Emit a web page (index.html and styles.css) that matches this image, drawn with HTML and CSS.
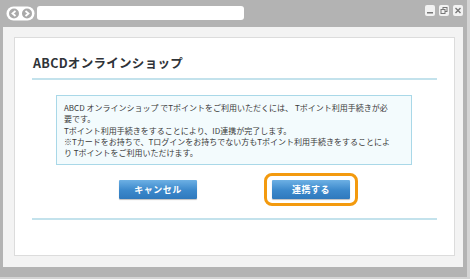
FILE: index.html
```html
<!DOCTYPE html>
<html lang="ja">
<head>
    <meta charset="UTF-8">
    <title>ABCDオンラインショップ</title>
    <link rel="stylesheet" href="styles.css">
</head>
<body>
    <div class="window">
        <div class="titlebar">
            <svg class="nav" width="29" height="15" viewBox="0 0 29 15">
                <rect x="0.5" y="0.5" width="28" height="14" rx="7" fill="#fff"/>
                <circle cx="8" cy="7.5" r="5" fill="#a9a9a9"/>
                <circle cx="21" cy="7.5" r="5" fill="#a9a9a9"/>
                <path d="M9.5 5 L6.5 7.5 L9.5 10" fill="none" stroke="#fff" stroke-width="1.8"/>
                <path d="M19.5 5 L22.5 7.5 L19.5 10" fill="none" stroke="#fff" stroke-width="1.8"/>
            </svg>
            <div class="address"></div>
            <div class="controls">
                <span class="ctl">
                    <svg width="10" height="11" viewBox="0 0 10 11"><rect x="2" y="7" width="6" height="1.5" fill="#777"/></svg>
                </span>
                <span class="ctl">
                    <svg width="10" height="11" viewBox="0 0 10 11"><rect x="4" y="2.5" width="4" height="4" fill="none" stroke="#777"/><rect x="2" y="4.5" width="4" height="4" fill="#f2f2f2" stroke="#777"/></svg>
                </span>
                <span class="ctl">
                    <svg width="10" height="11" viewBox="0 0 10 11"><path d="M2.5 3 L7.5 8 M7.5 3 L2.5 8" stroke="#777" stroke-width="1.4"/></svg>
                </span>
            </div>
        </div>

        <div class="frame">
            <div class="panel">
                <h1 class="shop-title">ABCDオンラインショップ</h1>

                <div class="notice">
                    ABCD オンラインショップ でTポイントをご利用いただくには、 Tポイント利用手続きが必<br>
                    要です。<br>
                    Tポイント利用手続きをすることにより、ID連携が完了します。<br>
                    ※Tカードをお持ちで、Tログインをお持ちでない方もTポイント利用手続きをすることによ<br>
                    り Tポイントをご利用いただけます。
                </div>

                <div class="actions">
                    <button class="btn">キャンセル</button>
                    <span class="focus-ring"><button class="btn">連携する</button></span>
                </div>
            </div>
        </div>
    </div>
</body>
</html>
```

FILE: styles.css
```css
body {
    margin: 0;
    background: #d4d4d4;
    font-family: "Noto Sans CJK JP", "Liberation Sans", sans-serif;
    color: #333;
}
.window {
    width: 467px;
    height: 277px;
    background: #b3b3b3;
    box-sizing: border-box;
    padding: 0 4px 10px 3px;
    display: flex;
    flex-direction: column;
}
.titlebar {
    height: 27px;
    display: flex;
    align-items: flex-start;
    padding-top: 6px;
    box-sizing: border-box;
}
.nav {
    margin-left: 3px;
}
.address {
    width: 207px;
    height: 14px;
    margin-left: 2px;
    background: #fff;
    border-radius: 3px;
}
.controls {
    margin-left: auto;
    margin-top: -1px;
    display: flex;
    gap: 4px;
}
.ctl {
    width: 10px;
    height: 11px;
    background: #f2f2f2;
    border-radius: 2px;
    display: block;
}
.ctl svg {
    display: block;
}
.frame {
    flex: 1;
    background: #f3f3f3;
    padding: 10px 8px 11px 11px;
}
.panel {
    height: 100%;
    box-sizing: border-box;
    background: #fff;
    border: 1px solid #dcdcdc;
    margin: 0;
    padding: 0 17px;
}
.shop-title {
    margin: 15px 0 0;
    padding: 0 0 0 1px;
    height: 25px;
    line-height: 20px;
    font-size: 12.5px;
    font-weight: bold;
    letter-spacing: 0.3px;
    color: #2f3338;
    border-bottom: 2px solid #c3e2ec;
}
.notice {
    margin: 15px 25px 0 24px;
    height: 70px;
    box-sizing: border-box;
    padding: 6px 0 0 7px;
    background: #f3fbfd;
    border: 1px solid #a9d8e8;
    font-size: 8px;
    line-height: 11.3px;
    color: #3a3a3a;
    white-space: nowrap;
}
.actions {
    display: flex;
    justify-content: center;
    align-items: center;
    gap: 75px;
    padding: 8px 0 12px;
    border-bottom: 2px solid #c3e2ec;
}
.btn {
    width: 78px;
    height: 19px;
    padding: 0;
    border: none;
    border-radius: 1px;
    background: linear-gradient(#6db0e4, #3b88cb 55%, #2f79bd);
    box-shadow: 0 1px 1px rgba(0, 0, 0, 0.25);
    color: #fff;
    font-family: "Noto Sans CJK JP", sans-serif;
    font-size: 9px;
    font-weight: bold;
    letter-spacing: 0.5px;
}
.focus-ring {
    display: flex;
    padding: 4px 5px;
    border: 3px solid #f39a0e;
    border-radius: 8px;
    margin: 0 -8px;
}
```
